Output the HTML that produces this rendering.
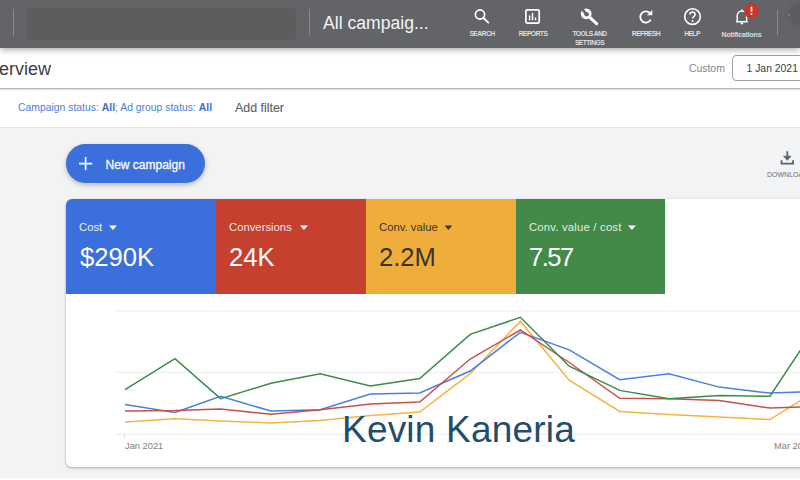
<!DOCTYPE html>
<html><head><meta charset="utf-8">
<style>
*{margin:0;padding:0;box-sizing:border-box}
html,body{width:800px;height:480px;overflow:hidden;background:#f1f3f4;font-family:"Liberation Sans",sans-serif;position:relative}
.abs{position:absolute}
#top{left:0;top:0;width:800px;height:48px;background:#626468;z-index:3;box-shadow:0 2px 6px rgba(0,0,0,.32)}
.sep{position:absolute;width:1.2px;background:#8a8c8f}
#blur{left:27px;top:8px;width:269px;height:32px;background:#5d5d5e;border-radius:4px;filter:blur(0.7px)}
#ttl{left:323px;top:12.5px;font-size:17.6px;color:#f4f4f4;white-space:nowrap}
.lbl{position:absolute;font-size:6.8px;font-weight:bold;letter-spacing:-0.6px;color:#dedede;white-space:nowrap;text-align:center;line-height:8.6px}
#hdr{left:0;top:48px;width:800px;height:41px;background:#fff;border-bottom:1px solid #b4b5b7;box-shadow:0 1px 2px rgba(0,0,0,.14);z-index:2}
#flt{left:0;top:89px;width:800px;height:39px;background:#fff;border-bottom:1px solid #e1e2e3}
.t{position:absolute;white-space:nowrap}
</style></head><body>
<div id="top" class="abs">
  <div class="sep" style="left:13px;top:9px;height:27px"></div>
  <div id="blur" class="abs"></div>
  <div class="sep" style="left:309px;top:9px;height:26px"></div>
  <div id="ttl" class="abs">All campaig...</div>
  <!-- search -->
  <svg class="abs" style="left:472px;top:7px" width="20" height="20" viewBox="0 0 20 20"><circle cx="8" cy="7.5" r="4.6" fill="none" stroke="#fff" stroke-width="1.7"/><path d="M11.3 10.8 L16.3 15.6" stroke="#fff" stroke-width="1.9" stroke-linecap="round"/></svg>
  <div class="lbl" style="left:462px;top:30px;width:40px">SEARCH</div>
  <!-- reports -->
  <svg class="abs" style="left:523px;top:7px" width="19" height="19" viewBox="0 0 19 19"><rect x="2.9" y="2.8" width="13.3" height="13.3" rx="1.3" fill="none" stroke="#fff" stroke-width="1.7"/><path d="M6.6 8.5V13.3M9.5 6V13.3M12.5 10.5V13.3" stroke="#fff" stroke-width="1.5"/></svg>
  <div class="lbl" style="left:512px;top:30px;width:42px">REPORTS</div>
  <!-- tools -->
  <svg class="abs" style="left:575px;top:3px" width="30" height="25" viewBox="0 0 30 25"><line x1="12" y1="11.8" x2="21.6" y2="20.6" stroke="#fff" stroke-width="3.1" stroke-linecap="round"/><circle cx="11.2" cy="10.8" r="5.4" fill="#fff"/><g transform="rotate(-38 11.2 11.2)"><rect x="9.9" y="4.5" width="2.7" height="6.8" fill="#626468"/></g><circle cx="11.6" cy="11.3" r="2.3" fill="#626468"/></svg>
  <div class="lbl" style="left:566px;top:30px;width:47px">TOOLS AND<br>SETTINGS</div>
  <!-- refresh -->
  <svg class="abs" style="left:636px;top:6.5px" width="19" height="19" viewBox="0 0 19 19"><path d="M14.3 6.5 A5.6 5.6 0 1 0 14.8 12.6" fill="none" stroke="#fff" stroke-width="1.8"/><path d="M16.3 2.9 V8.3 H10.9 Z" fill="#fff"/></svg>
  <div class="lbl" style="left:626px;top:30px;width:40px">REFRESH</div>
  <!-- help -->
  <svg class="abs" style="left:682px;top:6px" width="21" height="21" viewBox="0 0 21 21"><circle cx="10.5" cy="10.6" r="7.8" fill="none" stroke="#fff" stroke-width="1.6"/><path d="M7.9 8.6 C7.9 6.9 9.1 6 10.5 6 C11.9 6 13.1 7 13.1 8.4 C13.1 10.3 10.6 10.3 10.6 12.6" fill="none" stroke="#fff" stroke-width="1.6"/><circle cx="10.6" cy="14.9" r="1" fill="#fff"/></svg>
  <div class="lbl" style="left:672px;top:30px;width:40px">HELP</div>
  <!-- notifications -->
  <svg class="abs" style="left:732px;top:6px" width="20" height="22" viewBox="0 0 20 22"><path d="M4 15.8 H15.8 M5.2 15.6 V10 C5.2 7.2 7.2 5 9.9 5 C12.6 5 14.6 7.2 14.6 10 V15.6" fill="none" stroke="#fff" stroke-width="1.5"/><path d="M8.7 17.5 H11.1" stroke="#fff" stroke-width="1.6"/><path d="M9.9 3.6 V5" stroke="#fff" stroke-width="1.5"/></svg>
  <svg class="abs" style="left:743px;top:3px" width="16" height="16" viewBox="0 0 16 16"><circle cx="8.5" cy="8" r="7.5" fill="#c0392e"/><path d="M8.5 3.8 V8.8" stroke="#fff" stroke-width="1.7"/><circle cx="8.5" cy="11" r="0.95" fill="#fff"/></svg>
  <div class="lbl" style="left:716px;top:31px;width:51px;font-size:7px;letter-spacing:-0.2px">Notifications</div>
  <div class="sep" style="left:777px;top:10px;height:25px"></div>
  <div class="abs" style="left:789px;top:3px;width:26px;height:22px;border-radius:9px;background:#5c5c5d;filter:blur(1.5px)"></div><div class="abs" style="left:788px;top:14px;width:2px;height:2px;background:#7a7b7d;filter:blur(0.4px)"></div>
</div>

<div id="hdr" class="abs">
  <div class="t" style="left:-24px;top:11px;font-size:18px;color:#3c4043">Overview</div>
  <div class="t" style="left:689px;top:15px;font-size:10.4px;color:#80868b">Custom</div>
  <div class="abs" style="left:732px;top:7px;width:80px;height:26px;border:1px solid #9aa0a6;border-radius:4px;background:#fff"></div>
  <div class="t" style="left:746.5px;top:15px;font-size:10.4px;color:#3c4043">1 Jan 2021</div>
</div>

<div id="flt" class="abs">
  <div class="t" style="left:18px;top:12.5px;font-size:10.4px;color:#4a7fd6">Campaign status: <b style="color:#3b6fcf">All</b>; Ad group status: <b style="color:#3b6fcf">All</b></div>
  <div class="t" style="left:235px;top:12px;font-size:12.4px;-webkit-text-stroke:0.15px #5f6368;color:#5f6368">Add filter</div>
</div>

<!-- new campaign button -->
<div class="abs" style="left:66px;top:144px;width:139px;height:39px;border-radius:20px;background:#3b6fdc;box-shadow:0 2px 5px rgba(0,0,0,.25)"></div>
<svg class="abs" style="left:78px;top:156px" width="15" height="15" viewBox="0 0 15 15"><path d="M7.6 1V14.2M1 7.6H14.2" stroke="#fff" stroke-width="1.6"/></svg>
<div class="t" style="left:105.5px;top:157.5px;font-size:12px;-webkit-text-stroke:0.35px #f4f7fd;color:#f4f7fd">New campaign</div>

<!-- download -->
<svg class="abs" style="left:779px;top:150px" width="16" height="16" viewBox="0 0 16 16"><path d="M8.3 1.2V8.6" stroke="#5f6368" stroke-width="1.8"/><path d="M4.6 6.2 L8.3 10.3 L12 6.2 Z" fill="#5f6368" stroke="#5f6368" stroke-width="0.8" stroke-linejoin="round"/><path d="M2.5 10.3 V13.7 H14.1 V10.3" fill="none" stroke="#5f6368" stroke-width="1.8" stroke-linejoin="round"/></svg>
<div class="t" style="left:767px;top:171px;font-size:7px;color:#686c70">DOWNLOAD</div>

<!-- card -->
<div class="abs" style="left:66px;top:199px;width:760px;height:267.5px;background:#fff;border-radius:6px;box-shadow:0 1px 3px rgba(0,0,0,.3);overflow:hidden">
  <div class="abs" style="left:0;top:0;width:150px;height:94.5px;background:#3b6fdc"></div>
  <div class="abs" style="left:150px;top:0;width:150px;height:94.5px;background:#c6402f"></div>
  <div class="abs" style="left:300px;top:0;width:150px;height:94.5px;background:#efad3c"></div>
  <div class="abs" style="left:450px;top:0;width:149.3px;height:94.5px;background:#438a49"></div>
</div>
<div class="t" style="left:79px;top:221px;font-size:11.3px;color:rgba(255,255,255,.9)">Cost</div>
<div class="t" style="left:80px;top:243px;font-size:25.6px;color:#fff">$290K</div>
<div class="t" style="left:229px;top:221px;font-size:11.3px;color:rgba(255,255,255,.88)">Conversions</div>
<div class="t" style="left:229px;top:243px;font-size:25.6px;color:#fff">24K</div>
<div class="t" style="left:379px;top:221px;font-size:11.3px;color:#3d3626">Conv. value</div>
<div class="t" style="left:379px;top:243px;font-size:25.6px;color:#3a3428">2.2M</div>
<div class="t" style="left:529px;top:221px;font-size:11.3px;letter-spacing:0.2px;color:rgba(255,255,255,.88)">Conv. value / cost</div>
<div class="t" style="left:529px;top:243px;font-size:25.6px;letter-spacing:-1.5px;color:#fff">7.57</div>

<svg class="abs" style="left:0;top:0" width="800" height="480" viewBox="0 0 800 480">
  <path d="M109 225.4h7.8l-3.9 4.5z" fill="#fff"/>
  <path d="M300 225.4h7.8l-3.9 4.5z" fill="#fff"/>
  <path d="M444.5 225.4h7.8l-3.9 4.5z" fill="#3d3626"/>
  <path d="M628 225.4h7.8l-3.9 4.5z" fill="#fff"/>
  <path d="M115 311H800M115 372.3H800M115 434.3H800" stroke="#ebebec" stroke-width="1"/>
  <path d="M124.5 434.5V438.5" stroke="#e0e0e0" stroke-width="1"/>
  <g fill="none" stroke-width="1.5" stroke-linejoin="miter">
  <path stroke="#f2b443" d="M125 422 L175 418.7 L220.6 421.1 L270.9 423 L320.2 420.5 L370.3 415.5 L419.7 412 L470.2 373.7 L520.4 321.25 L569.2 380.2 L619.7 411.5 L669 414.4 L719.2 417.1 L769.9 419.6 L820 388.4"/>
  
  <path stroke="#4a7fdf" d="M125 404.6 L175 412.5 L220.6 396.4 L270.9 411 L320.2 409.7 L370.3 394.1 L419.7 393 L470.2 371 L520.4 332.3 L569.2 349.9 L619.7 379.7 L669 373.75 L719.2 387.1 L769.9 393.1 L820 391.1"/>
  <path stroke="#c9504a" d="M125 411.1 L175 410.6 L220.6 409.1 L270.9 414.2 L320.2 409.7 L370.3 404 L419.7 402 L470.2 359 L520.4 330 L569.2 362.5 L619.7 398.3 L669 398.75 L719.2 400.4 L769.9 408.1 L820 406.3"/>
  <path stroke="#3d8a4c" d="M125 389.7 L175 358.7 L220.6 398.6 L270.9 383.3 L320.2 373.8 L370.3 386.1 L419.7 378.6 L470.2 334.4 L520.4 317.3 L569.2 366.25 L619.7 390.4 L669 398.75 L719.2 395.6 L769.9 396.25 L820 320.7"/>
  </g>
</svg>
<div class="t" style="left:125px;top:441px;font-size:9.3px;color:#7a7e82">Jan 2021</div>
<div class="t" style="left:774px;top:441px;font-size:9.3px;color:#7a7e82">Mar 2021</div>
<div class="abs" style="left:0;top:478px;width:800px;height:2px;background:#fcfdfd"></div>
<div class="t" style="left:342px;top:409px;font-size:37px;letter-spacing:0.2px;color:#1f4d6b">Kevin Kaneria</div>

</body></html>
